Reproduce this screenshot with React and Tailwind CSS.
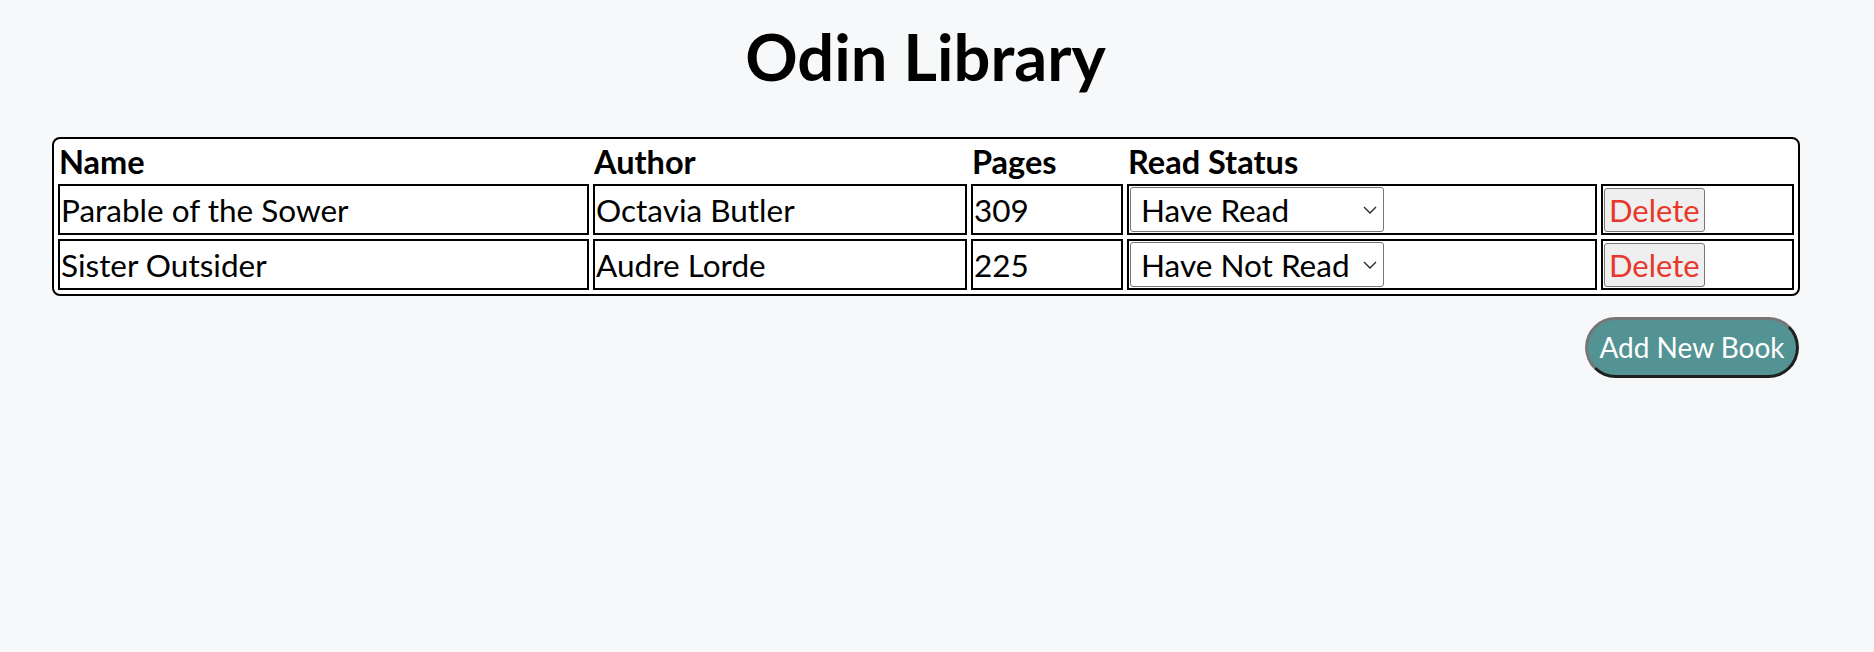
import React, { useState } from "react";

const initialBooks = [
  { name: "Parable of the Sower", author: "Octavia Butler", pages: 309, status: "Have Read" },
  { name: "Sister Outsider", author: "Audre Lorde", pages: 225, status: "Have Not Read" },
];

const Chevron = () => (
  <svg
    className="pointer-events-none absolute right-[7px] top-[19px]"
    width="14"
    height="8"
    viewBox="0 0 14 8"
    fill="none"
  >
    <path d="M1 1l6 6 6-6" stroke="#222" strokeWidth="1.3" />
  </svg>
);

const App = () => {
  const [books, setBooks] = useState(initialBooks);

  const setStatus = (index, status) => {
    const next = [...books];
    next[index] = { ...next[index], status };
    setBooks(next);
  };

  const removeBook = (index) => setBooks(books.filter((_, i) => i !== index));

  return (
    <div className="min-h-screen bg-[#f7f8fa] text-black font-['Lato',sans-serif]">
      <div className="flex flex-col pl-[52px] pr-[75px] pt-[17px]">
        {/* Header */}
        <h1 className="text-center text-[65px] font-bold leading-[78px] mb-[42px]">Odin Library</h1>

        {/* Book table */}
        <table className="w-full table-fixed border-separate border-spacing-[4px] border-2 border-black rounded-[8px] bg-white text-[31.5px] leading-[38px]">
          <colgroup>
            <col className="w-[531px]" />
            <col className="w-[374px]" />
            <col className="w-[152px]" />
            <col className="w-[470px]" />
            <col className="w-[193px]" />
          </colgroup>
          <thead>
            <tr>
              <th className="p-px text-left text-[32.5px] font-bold leading-[35px]">Name</th>
              <th className="p-px text-left text-[32.5px] font-bold leading-[35px]">Author</th>
              <th className="p-px text-left text-[32.5px] font-bold leading-[35px]">Pages</th>
              <th className="p-px text-left text-[32.5px] font-bold leading-[35px]">Read Status</th>
              <th className="p-px"></th>
            </tr>
          </thead>
          <tbody>
            {books.map((book, index) => (
              <tr key={book.name}>
                <td className="border-2 border-black p-px align-middle">{book.name}</td>
                <td className="border-2 border-black p-px align-middle">{book.author}</td>
                <td className="border-2 border-black p-px align-middle">{book.pages}</td>
                <td className="border-2 border-black p-px align-middle">
                  <div className="relative w-[254px]">
                    <select
                      value={book.status}
                      onChange={(e) => setStatus(index, e.target.value)}
                      className="block h-[45px] w-[254px] appearance-none rounded-[3px] border border-[#767676] bg-white pl-[10px] text-[31.5px] leading-[38px]"
                    >
                      <option>Have Read</option>
                      <option>Have Not Read</option>
                    </select>
                    <Chevron />
                  </div>
                </td>
                <td className="border-2 border-black p-px align-middle">
                  <button
                    onClick={() => removeBook(index)}
                    className="block h-[44px] rounded-[3px] border border-[#767676] bg-[#efefef] px-[4px] text-[31px] leading-[38px] text-[#e8372b]"
                  >
                    Delete
                  </button>
                </td>
              </tr>
            ))}
          </tbody>
        </table>

        {/* Add button */}
        <button className="mt-[21px] self-end h-[61px] w-[214px] rounded-full border-[3px] border-t-[#767676] border-l-[#767676] border-b-[#1f1f1f] border-r-[#1f1f1f] bg-[#539394] text-[28px] leading-[1.2] text-white">
          Add New Book
        </button>
      </div>
    </div>
  );
};

export default App;
